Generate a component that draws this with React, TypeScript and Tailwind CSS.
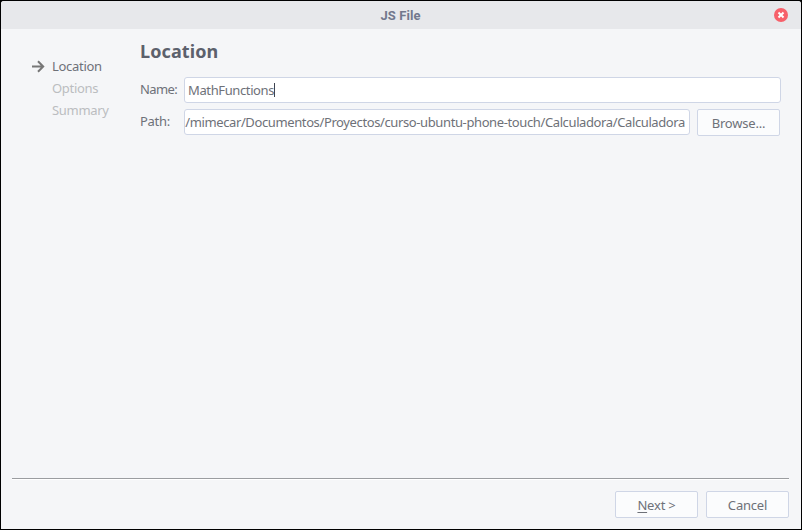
import React from "react";

const steps = [
  { label: "Location", active: true },
  { label: "Options", active: false },
  { label: "Summary", active: false },
];

function Button({ children, className = "" }: { children: React.ReactNode; className?: string }) {
  return (
    <button
      className={`flex h-[27px] w-[83px] shrink-0 items-center justify-center rounded-[2px] border border-[#cfd6e6] bg-[#fbfcfd] pt-[2px] ${className}`}
    >
      {children}
    </button>
  );
}

function TitleBar() {
  return (
    <header className="flex h-7 shrink-0 items-center bg-[#e7e8eb] pl-[26px] pr-[13px]">
      <h1 className="flex-1 text-center font-['Roboto',sans-serif] text-[13px] font-bold leading-none tracking-[0.1px] text-[#72788d]">
        JS File
      </h1>
      <button aria-label="Close" className="h-[14px] w-[14px]">
        <svg viewBox="0 0 14 14" className="block h-[14px] w-[14px]">
          <circle cx="7" cy="7" r="7" fill="#f7606a" />
          <path d="M5.2 5.2 8.8 8.8M8.8 5.2 5.2 8.8" stroke="#fff" strokeWidth="2" strokeLinecap="square" />
        </svg>
      </button>
    </header>
  );
}

export default function App() {
  return (
    <div className="h-[530px] w-[802px] bg-black p-px font-['Noto_Sans',sans-serif] text-[13px] leading-none text-[#6e7178]">
      <div className="flex h-[528px] flex-col overflow-hidden rounded-t-[3px] bg-[#f5f6f8]">
        <TitleBar />
        <main className="flex h-[449px] shrink-0">
          <ul className="w-[139px] pl-[31px] pt-[26px]">
            {steps.map((s) => (
              <li key={s.label} className={`flex h-[22px] items-center ${s.active ? "" : "text-[#bbbdc0]"}`}>
                <span className="w-5">
                  {s.active && (
                    <svg viewBox="0 0 13 13" className="block h-[13px] w-[13px]">
                      <path d="M0 6.5H11M6 1.2 11.2 6.5 6 11.8" fill="none" stroke="#777" strokeWidth="2" />
                    </svg>
                  )}
                </span>
                <span className="tracking-[-0.3px]">{s.label}</span>
              </li>
            ))}
          </ul>
          <section className="w-[641px] pt-[12px]">
            <h2 className="flex h-5 items-center text-[18px] font-bold leading-none tracking-[0.1px] text-[#5c616c]">
              Location
            </h2>
            <div className="mt-4 flex h-[26px]">
              <label className="flex w-11 shrink-0 items-center pb-[2px] tracking-[-0.6px]">Name:</label>
              <div className="flex w-[597px] items-center rounded-[3px] border border-[#cfd6e6] bg-white pl-[3px]">
                <span className="tracking-[-0.38px]">MathFunctions</span>
                <span className="h-[14px] w-px bg-[#3f4450]" />
              </div>
            </div>
            <div className="mt-[6px] flex items-start">
              <label className="flex h-[26px] w-11 shrink-0 items-center pb-[2px] tracking-[-0.3px]">Path:</label>
              <div className="flex h-[26px] w-[506px] items-center justify-end rounded-[3px] border border-[#cfd6e6] bg-white pr-[4px]">
                <span className="whitespace-nowrap tracking-[-0.385px]">
                  /mimecar/Documentos/Proyectos/curso-ubuntu-phone-touch/Calculadora/Calculadora
                </span>
              </div>
              <Button className="ml-[7px]">
                <span className="tracking-[-0.2px]">Browse...</span>
              </Button>
            </div>
          </section>
        </main>
        <footer className="ml-[11px] mr-3 border-t border-[#9b9da0]">
          <div className="flex justify-end gap-2 border-t border-white pt-[11px]">
            <Button>
              <span className="tracking-[-0.2px]">
                <span className="underline underline-offset-2">N</span>ext &gt;
              </span>
            </Button>
            <Button>
              <span className="tracking-[-0.2px]">Cancel</span>
            </Button>
          </div>
        </footer>
      </div>
    </div>
  );
}
